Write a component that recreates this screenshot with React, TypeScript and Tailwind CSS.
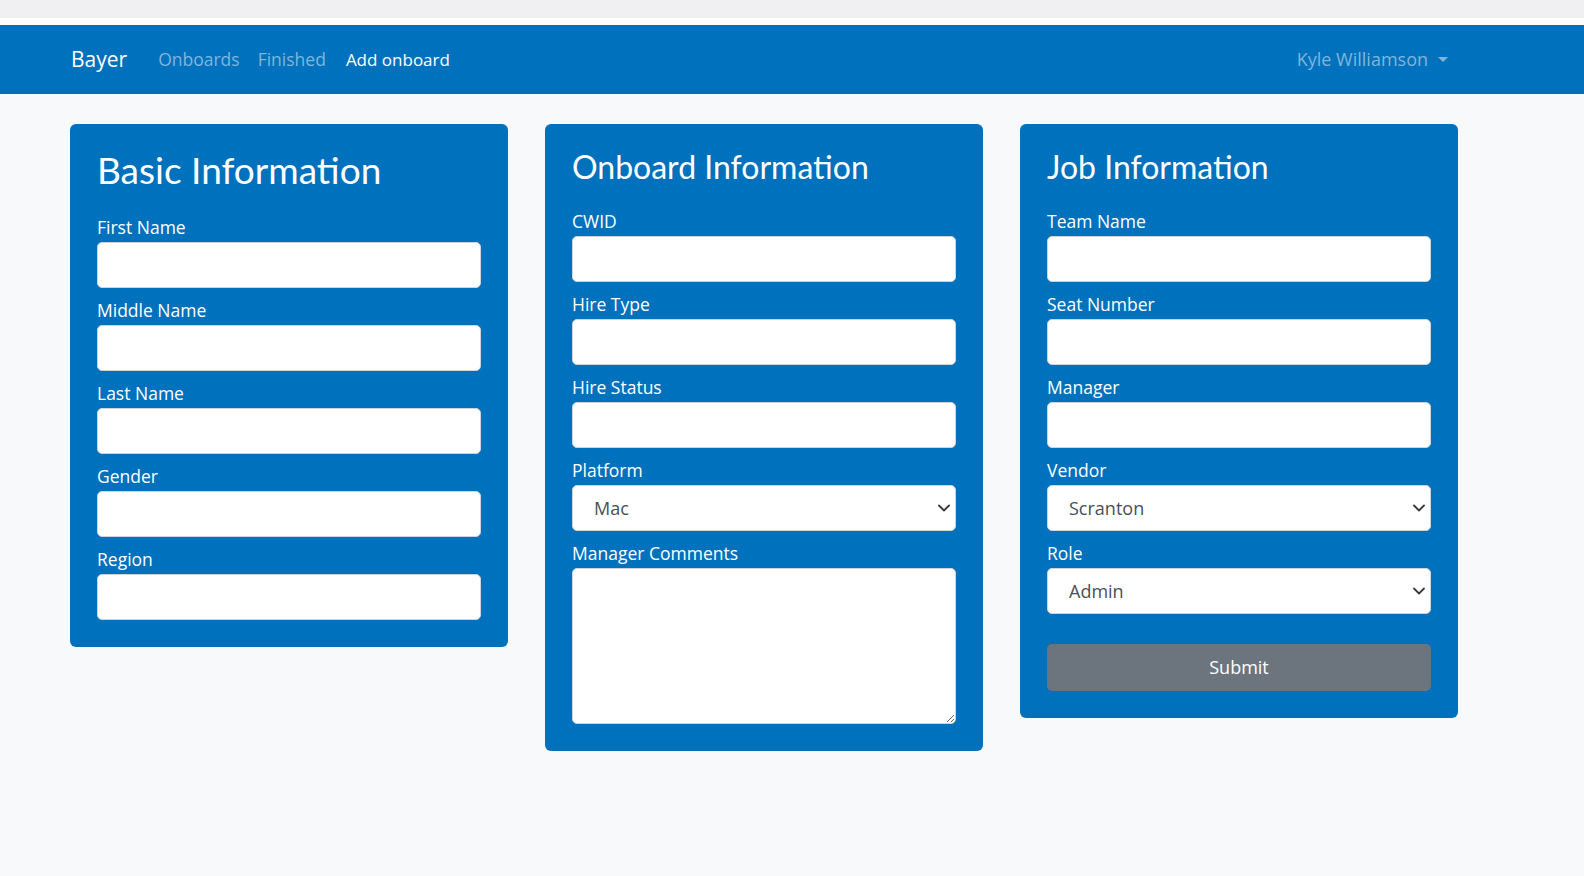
import React from "react";

const FONT = { fontFamily: '"Open Sans", "Noto Sans", sans-serif' };
const TITLE_FONT = { fontFamily: 'Lato, "Open Sans", sans-serif' };

function Chevron() {
  return (
    <svg
      className="pointer-events-none absolute right-[5px] top-1/2 -translate-y-1/2"
      width="14"
      height="10"
      viewBox="0 0 16 12"
      fill="none"
    >
      <path d="M2 3l6 6 6-6" stroke="#343a40" strokeWidth="2.2" strokeLinecap="round" strokeLinejoin="round" />
    </svg>
  );
}

function Field({ label, children }: { label: string; children?: React.ReactNode }) {
  return (
    <div className="mb-[11px]">
      <label className="mb-[4px] block text-[17.5px] leading-[22px] text-white">{label}</label>
      {children ?? (
        <input
          type="text"
          className="block h-[46px] w-full rounded-[5px] border border-[#ced4da] bg-white px-[16px] text-[18px] text-[#495057] outline-none"
        />
      )}
    </div>
  );
}

function SelectField({ label, value, options }: { label: string; value: string; options: string[] }) {
  return (
    <Field label={label}>
      <div className="relative">
        <select
          defaultValue={value}
          className="block h-[46px] w-full appearance-none rounded-[5px] border border-[#ced4da] bg-white pl-[21px] text-[18px] text-[#495057] outline-none"
        >
          {options.map((o) => (
            <option key={o}>{o}</option>
          ))}
        </select>
        <Chevron />
      </div>
    </Field>
  );
}

function Card({ title, big, children }: { title: string; big?: boolean; children: React.ReactNode }) {
  return (
    <div className="w-[438px] rounded-[6px] bg-[#0071bc] px-[27px] pb-[16px] pt-[23px]">
      {big ? (
        <h1 className="mb-[23px] text-[37px] font-normal leading-[46px] text-white" style={TITLE_FONT}>
          {title}
        </h1>
      ) : (
        <h2 className="mb-[23px] text-[32px] font-normal leading-[40px] text-white" style={TITLE_FONT}>
          {title}
        </h2>
      )}
      {children}
    </div>
  );
}

export default function App() {
  return (
    <div className="min-h-screen bg-[#f8f9fa]" style={FONT}>
      <div className="h-[18px] bg-[#f0f0f2]" />
      <div className="h-[7px] bg-white" />
      <nav className="flex h-[69px] items-center bg-[#0071bc] pl-[71px] pr-[136px]">
        <span className="text-[21px] text-white">Bayer</span>
        <span className="ml-[31px] text-[17.5px] text-[#7fb6dc]">Onboards</span>
        <span className="ml-[18px] text-[17.5px] text-[#7fb6dc]">Finished</span>
        <span className="ml-[20px] text-[17px] text-white">Add onboard</span>
        <div className="ml-auto flex items-center text-[18px] text-[#7fb6dc]">
          <span>Kyle Williamson</span>
          <span className="ml-[10px] h-0 w-0 border-x-[5px] border-t-[5px] border-x-transparent border-t-[#7fb6dc]" />
        </div>
      </nav>

      <div className="flex items-start gap-[37px] pl-[70px] pt-[30px]">
        <Card title="Basic Information" big>
          <Field label="First Name" />
          <Field label="Middle Name" />
          <Field label="Last Name" />
          <Field label="Gender" />
          <Field label="Region" />
        </Card>

        <Card title="Onboard Information">
          <Field label="CWID" />
          <Field label="Hire Type" />
          <Field label="Hire Status" />
          <SelectField label="Platform" value="Mac" options={["Mac", "Windows", "Linux"]} />
          <Field label="Manager Comments">
            <textarea className="block h-[156px] w-full rounded-[5px] border border-[#ced4da] bg-white px-[16px] py-[8px] text-[18px] text-[#495057] outline-none" />
          </Field>
        </Card>

        <Card title="Job Information">
          <Field label="Team Name" />
          <Field label="Seat Number" />
          <Field label="Manager" />
          <SelectField label="Vendor" value="Scranton" options={["Scranton", "Stamford", "Nashua"]} />
          <SelectField label="Role" value="Admin" options={["Admin", "Developer", "Analyst"]} />
          <button
            type="button"
            className="mb-[11px] mt-[30px] block h-[47px] w-full rounded-[5px] bg-[#6c757d] text-[18px] text-white"
          >
            Submit
          </button>
        </Card>
      </div>
    </div>
  );
}
